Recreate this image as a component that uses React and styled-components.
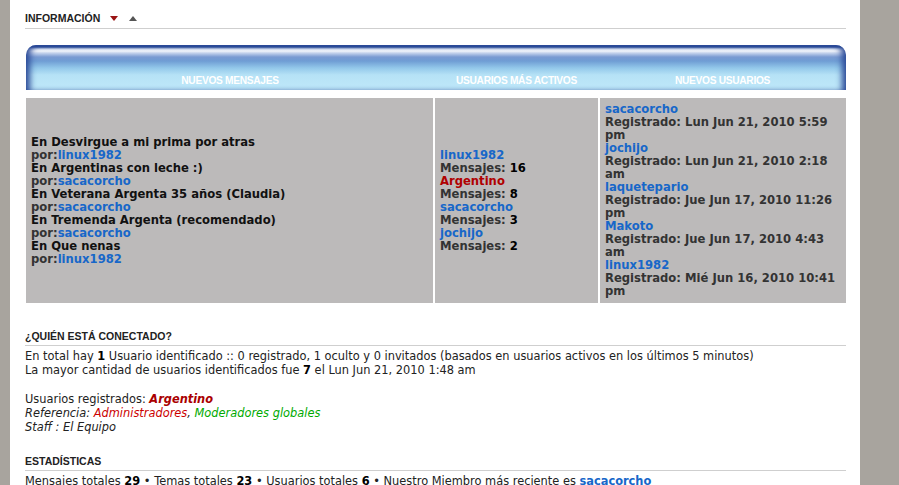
import React from 'react'
import styled, { createGlobalStyle } from 'styled-components'

const GlobalStyle = createGlobalStyle`
  html, body { margin: 0; padding: 0; height: 100%; overflow: hidden; }
  body { background: #fff; font-family: "DejaVu Sans", Verdana, sans-serif; }
`

const latest = [
  { topic: 'Desvirgue a mi prima por atras', by: 'linux1982' },
  { topic: 'Argentinas con leche :)', by: 'sacacorcho' },
  { topic: 'Veterana Argenta 35 años (Claudia)', by: 'sacacorcho' },
  { topic: 'Tremenda Argenta (recomendado)', by: 'sacacorcho' },
  { topic: 'Que nenas', by: 'linux1982' },
]

const active = [
  { name: 'linux1982', posts: 16 },
  { name: 'Argentino', posts: 8, admin: true },
  { name: 'sacacorcho', posts: 3 },
  { name: 'jochijo', posts: 2 },
]

const newUsers = [
  { name: 'sacacorcho', date: 'Lun Jun 21, 2010 5:59 pm' },
  { name: 'jochijo', date: 'Lun Jun 21, 2010 2:18 am' },
  { name: 'laquetepario', date: 'Jue Jun 17, 2010 11:26 pm' },
  { name: 'Makoto', date: 'Jue Jun 17, 2010 4:43 am' },
  { name: 'linux1982', date: 'Mié Jun 16, 2010 10:41 pm' },
]

const App = () => {
  return (
    <>
      <GlobalStyle />
      <Page>
        <Gutter />
        <Content>
          <SectionTitle>
            INFORMACIÓN
            <Arrow down />
            <Arrow />
          </SectionTitle>

          <GlossBar>
            <BarLabel>NUEVOS MENSAJES</BarLabel>
            <BarLabel>USUARIOS MÁS ACTIVOS</BarLabel>
            <BarLabel>NUEVOS USUARIOS</BarLabel>
          </GlossBar>

          <InfoGrid>
            <Cell>
              {latest.map((p, i) => (
                <React.Fragment key={i}>
                  <Strong>En {p.topic}</Strong>
                  <Muted>por:<UserLink>{p.by}</UserLink></Muted>
                </React.Fragment>
              ))}
            </Cell>
            <Cell>
              {active.map(u => (
                <React.Fragment key={u.name}>
                  <UserLink admin={u.admin}>{u.name}</UserLink>
                  <Muted>Mensajes: <Num>{u.posts}</Num></Muted>
                </React.Fragment>
              ))}
            </Cell>
            <Cell>
              {newUsers.map(u => (
                <React.Fragment key={u.name}>
                  <UserLink block>{u.name}</UserLink>
                  <Muted>Registrado: {u.date}</Muted>
                </React.Fragment>
              ))}
            </Cell>
          </InfoGrid>

          <SubTitle gap="27px">¿QUIÉN ESTÁ CONECTADO?</SubTitle>
          <Text>
            En total hay <b>1</b> Usuario identificado :: 0 registrado, 1 oculto y 0 invitados (basados en usuarios activos en los últimos 5 minutos)
            <br />
            La mayor cantidad de usuarios identificados fue <b>7</b> el Lun Jun 21, 2010 1:48 am
            <br />
            <br />
            Usuarios registrados: <AdminName>Argentino</AdminName>
            <br />
            <em>Referencia: <Legend color="#cc0000">Administradores</Legend>, <Legend color="#00aa00">Moderadores globales</Legend></em>
            <br />
            <em>Staff : El Equipo</em>
          </Text>

          <SubTitle gap="20px">ESTADÍSTICAS</SubTitle>
          <Text>
            Mensajes totales <b>29</b> • Temas totales <b>23</b> • Usuarios totales <b>6</b> • Nuestro Miembro más reciente es <UserLink>sacacorcho</UserLink>
          </Text>
        </Content>
        <Gutter right />
      </Page>
    </>
  )
}

export default App

const Page = styled.div`
display: flex;
height: 100vh;
`
const Gutter = styled.div`
flex: 0 0 ${props => props.right ? '39px' : '10px'};
background: #a8a49e;
`
const Content = styled.div`
flex: 1;
padding: 12px 14px 0 15px;
background: #fff;
`
const SectionTitle = styled.div`
display: flex;
align-items: center;
font-family: "Liberation Sans", Arial, sans-serif;
font-weight: bold;
font-size: 10.5px;
color: #222;
padding-bottom: 4px;
border-bottom: 1px solid #cfcfcf;
`
const Arrow = styled.span`
width: 0;
height: 0;
border-left: 4px solid transparent;
border-right: 4px solid transparent;
${props => props.down
  ? 'border-top: 5px solid #9a1414; margin-left: 10px;'
  : 'border-bottom: 5px solid #555; margin-left: 11px;'}
`
const GlossBar = styled.div`
display: grid;
grid-template-columns: 408px 165px 1fr;
margin: 16px 0 0 1px;
height: 45px;
border-radius: 10px 10px 0 0;
background: linear-gradient(to bottom,
  #2b4a97 0px, #2b4a97 2px,
  #c9d4ea 4px, #f3f6fb 6px,
  #c5d3ec 8px, #7a9bd2 12px,
  #6f9dd4 16px, #93c8ea 23px,
  #b6e2f6 30px, #bfe8f9 45px);
box-shadow: inset 7px 0 6px -3px #2b4a97, inset -7px 0 6px -3px #2b4a97;
`
const BarLabel = styled.div`
align-self: end;
padding-bottom: 4px;
text-align: center;
color: #fff;
font-family: "Liberation Sans", Arial, sans-serif;
font-weight: bold;
font-size: 10.2px;
letter-spacing: -0.3px;
`
const InfoGrid = styled.div`
display: grid;
grid-template-columns: 407px 163px 1fr;
column-gap: 2px;
margin: 8px 0 0 1px;
height: 205px;
`
const Cell = styled.div`
display: flex;
flex-direction: column;
justify-content: center;
padding: 0 5px;
background: #bcbaba;
font-family: "DejaVu Sans", Verdana, sans-serif;
font-weight: bold;
font-size: 11.6px;
line-height: 13px;
`
const Strong = styled.div`
color: #111;
`
const Muted = styled.div`
color: #333;
`
const Num = styled.span`
color: #000;
`
const UserLink = styled.span`
color: ${props => props.admin ? '#b00000' : '#1767c9'};
font-weight: bold;
display: ${props => props.admin || props.block ? 'block' : 'inline'};
`
const SubTitle = styled.div`
margin-top: ${props => props.gap};
font-family: "Liberation Sans", Arial, sans-serif;
font-weight: bold;
font-size: 10.5px;
color: #222;
padding-bottom: 3px;
border-bottom: 1px solid #cfcfcf;
`
const Text = styled.div`
padding-top: 3px;
font-family: "DejaVu Sans", Verdana, sans-serif;
font-size: 11.4px;
line-height: 14.3px;
color: #222;
b { color: #000; }
`
const AdminName = styled.span`
color: #aa0000;
font-weight: bold;
font-style: italic;
`
const Legend = styled.span`
color: ${props => props.color};
`
